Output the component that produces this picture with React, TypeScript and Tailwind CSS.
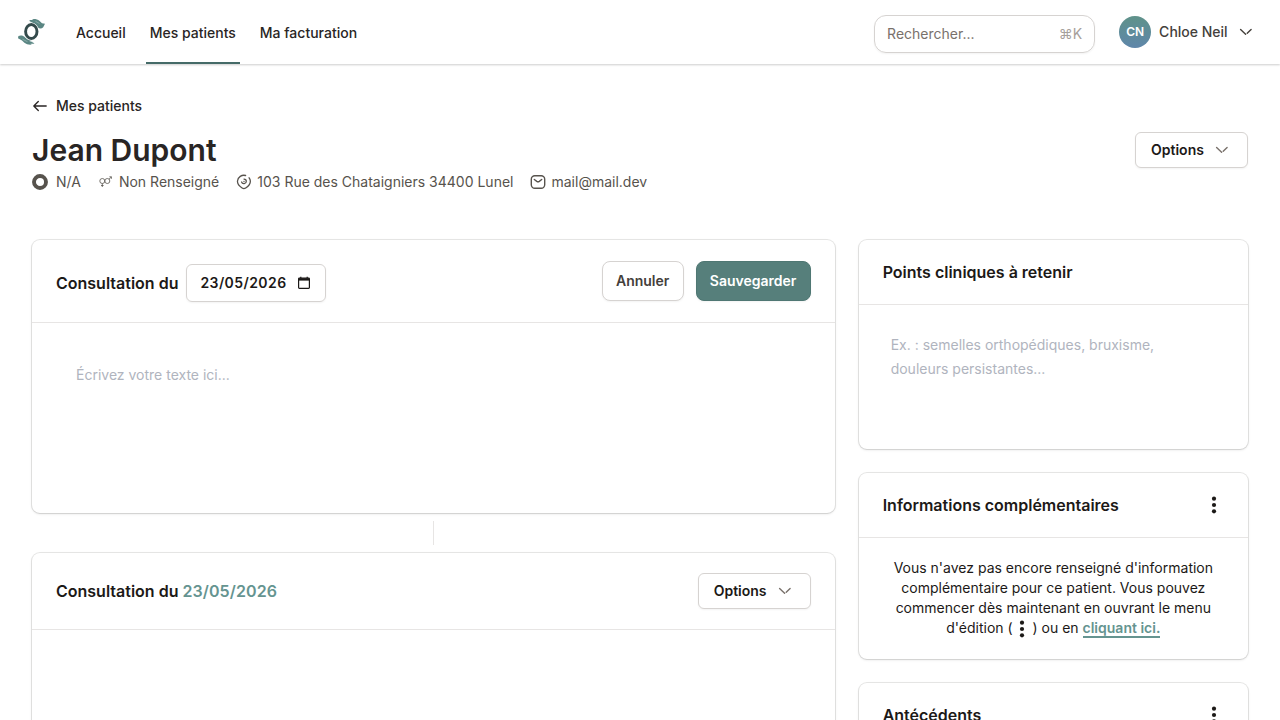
import { ReactNode } from 'react';
import clsx from 'clsx';

function Logo() {
    return (
        <svg width="28" height="26" viewBox="0 0 28 26" fill="none">
            <path d="M11.500 1.100h4.200L14 .2c3-.4 5.500.2 7.600 1.800l2.400 2.300 3 .5-1.800 3.400c-1.500 1.600-3.800 1.500-5.300.2-1.600-1.600-3-2.600-4.800-3.200l-3-1.500 3 .2-3.400-1.600z" fill="#5a8683" />
            <path d="M16.500 24.700h-4.200l1.700.9c-3 .4-5.500-.2-7.600-1.800L4 21.500 0 19.300l.4-2.200c1.500-.8 4-1 6 .7 1.600 1.600 3 2.600 4.800 3.200l3.500 1.300-3.500 0 3.900 1.200z" fill="#5a8683" />
            <path d="M17.500 2.300l4 2.200M4.500 20.300l5 2.400" stroke="#a9c2c0" strokeWidth=".6" />
            <ellipse cx="13.300" cy="12.500" rx="5.700" ry="7" fill="#fff" stroke="#fff" strokeWidth="4" />
            <ellipse cx="13.300" cy="12.500" rx="5.700" ry="7" stroke="#334a4b" strokeWidth="2.900" />
        </svg>
    );
}

function ChevronDown({ className }: { className?: string }) {
    return (
        <svg className={className} width="16" height="16" viewBox="0 0 16 16" fill="none" stroke="currentColor" strokeWidth="1.400" strokeLinecap="round">
            <path d="M2.600 5.400 7.600 10.200" />
            <path d="M9.200 9.300 13.100 5.400" />
        </svg>
    );
}

function Dots({ className }: { className?: string }) {
    return (
        <svg className={className} width="24" height="24" viewBox="0 0 24 24" fill="currentColor">
            <circle cx="12" cy="5.700" r="2.100" />
            <circle cx="12" cy="12" r="2.100" />
            <circle cx="12" cy="18.300" r="2.100" />
        </svg>
    );
}

function OptionsButton() {
    return (
        <button className="flex h-9 w-[113px] items-center justify-between rounded-md border border-stone-300 bg-white pr-[17px] pl-[15px] text-sm font-semibold text-stone-900 shadow-xs">
            Options
            <ChevronDown className="text-stone-500" />
        </button>
    );
}

function Card({ header, headerClass, className, children }: {
    header: ReactNode;
    headerClass: string;
    className?: string;
    children?: ReactNode;
}) {
    return (
        <section className={clsx('rounded-lg bg-white shadow-sm ring-1 ring-stone-900/10', className)}>
            <div className={clsx('flex items-center justify-between border-b border-stone-200 px-6', headerClass)}>
                {header}
            </div>
            {children}
        </section>
    );
}

function Header() {
    return (
        <header className="flex h-16 shrink-0 items-center bg-white shadow-[0_1px_2px_0_rgba(0,0,0,0.2)]">
            <div className="ml-[18px] w-[54px]">
                <Logo />
            </div>
            <nav className="flex h-full gap-4 text-sm font-medium text-stone-800">
                <a className="flex items-center border-b-2 border-transparent px-1 pt-1">Accueil</a>
                <a className="flex items-center border-b-2 border-[#456b68] px-1 pt-1">Mes patients</a>
                <a className="flex items-center border-b-2 border-transparent px-1 pt-1">Ma facturation</a>
            </nav>
            <div className="mt-1 ml-auto flex h-[38px] w-[221px] items-center justify-between rounded-xl border border-stone-300 px-3 text-sm shadow-xs">
                <span className="text-stone-500">Rechercher...</span>
                <span className="text-stone-400">⌘K</span>
            </div>
            <div className="mr-[26px] ml-6 flex items-center text-sm font-medium text-stone-700">
                <span className="mr-2 flex size-8 items-center justify-center rounded-full bg-linear-to-b from-[#5f9289] to-[#5f86aa] text-xs font-semibold text-white">CN</span>
                Chloe Neil
                <ChevronDown className="ml-[10.400px]" />
            </div>
        </header>
    );
}

function PatientDetails() {
    return (
        <div className="mt-0.5 flex h-6 items-center text-sm text-stone-600">
            <svg className="mr-2" width="16" height="16" viewBox="0 0 16 16" fill="none" stroke="currentColor" strokeWidth="3.900">
                <circle cx="8" cy="8" r="6" />
            </svg>
            N/A
            <svg className="mr-[7px] ml-[18px]" width="13" height="12" viewBox="0 0 13 12" fill="none" stroke="currentColor" strokeWidth=".8">
                <circle cx="3.300" cy="5" r="2.500" />
                <circle cx="8.300" cy="5" r="2.500" />
                <path d="M3.300 7.500v3.500M2 9.500h2.600M10 3.200 12.300 1M10.400.8h2v2" />
            </svg>
            Non Renseigné
            <svg className="mr-[5px] ml-[17px]" width="16" height="16" viewBox="0 0 16 16" fill="none" stroke="currentColor" strokeWidth="1.300" strokeLinecap="round">
                <path d="M9.600 1.500A6.400 6.400 0 0 0 1.500 7c-.3 3 1.600 5 4.600 7 1.200.8 2.400.8 3.600 0 3-2 5-4.200 4.600-7.200-.1-1.200-.6-2.200-1.200-3" />
                <path d="M5.600 8c.8 2.600 4.700 2 4.700-.7A2.300 2.300 0 0 0 8 5.100M8 7.400v.2" />
            </svg>
            103 Rue des Chataigniers 34400 Lunel
            <svg className="mr-[5.500px] ml-[16.500px]" width="16" height="16" viewBox="0 0 16 16" fill="none" stroke="currentColor" strokeWidth="1.400" strokeLinecap="round">
                <rect x="1.300" y="1.800" width="13.400" height="12.400" rx="3.500" />
                <path d="M4.300 5.500 6.800 7.300c.8.500 1.700.5 2.500 0l2.400-1.800" />
            </svg>
            mail@mail.dev
        </div>
    );
}

export default function App() {
    return (
        <div className="flex h-screen flex-col overflow-hidden bg-white font-['Inter',sans-serif] text-stone-900">
            <Header />
            <main className="px-8 pt-8">
                <a className="flex h-5 items-center gap-2 text-sm font-medium text-stone-800">
                    <svg width="16" height="16" viewBox="0 0 16 16" fill="none" stroke="currentColor" strokeWidth="1.300" strokeLinecap="round" strokeLinejoin="round">
                        <path d="M6.300 3.500 1.800 8l4.500 4.500M1.900 8h12.300" />
                    </svg>
                    Mes patients
                </a>
                <div className="mt-4 flex h-9 items-center justify-between">
                    <h1 className="text-3xl font-semibold text-stone-800">Jean Dupont</h1>
                    <OptionsButton />
                </div>
                <PatientDetails />

                <div className="mt-[46px] grid grid-cols-3 items-start gap-6">
                    <div className="col-span-2">
                        <Card
                            className="h-[273px]"
                            headerClass="h-[83px]"
                            header={
                                <>
                                    <div className="mt-1 flex items-center gap-2 font-semibold">
                                        Consultation du
                                        <div className="flex h-[38px] w-[140px] items-center justify-between rounded-md border border-stone-300 px-[13px] text-sm shadow-xs">
                                            <span className="tracking-[0.42px]">23/05/2026</span>
                                            <svg className="mr-0.5" width="12" height="14" viewBox="0 0 12 14" fill="none" stroke="currentColor" strokeWidth="1.200">
                                                <rect x=".6" y="2.100" width="10.800" height="10.300" rx=".8" />
                                                <path d="M.6 3.400h10.800" strokeWidth="2.400" />
                                                <path d="M2.800.8v1.400M9.200.8v1.400" />
                                            </svg>
                                        </div>
                                    </div>
                                    <div className="flex gap-3 text-sm font-semibold">
                                        <button className="h-10 w-[82px] rounded-lg border border-stone-300 bg-white text-stone-700 shadow-xs">Annuler</button>
                                        <button className="h-10 w-[115px] rounded-lg border border-[#4f7773] bg-[#567f7b] text-white shadow-xs">Sauvegarder</button>
                                    </div>
                                </>
                            }
                        >
                            <p className="px-11 pt-[42px] text-sm text-[#b0b4be]">Écrivez votre texte ici...</p>
                        </Card>
                        <div className="mx-auto my-2 h-6 w-px bg-stone-200" />
                        <Card
                            className="h-[273px]"
                            headerClass="h-[77px]"
                            header={
                                <>
                                    <h2 className="font-semibold">
                                        Consultation du <span className="tracking-[0.1px] text-[#659490]">23/05/2026</span>
                                    </h2>
                                    <OptionsButton />
                                </>
                            }
                        />
                    </div>

                    <div className="flex flex-col gap-6">
                        <Card className="h-[209px]" headerClass="h-[65px]" header={<h2 className="font-semibold">Points cliniques à retenir</h2>}>
                            <p className="pt-7 pr-12 pl-8 text-sm leading-6 text-[#b0b4be]">
                                Ex. : semelles orthopédiques, bruxisme, douleurs persistantes...
                            </p>
                        </Card>
                        <Card
                            className="h-[186px]"
                            headerClass="h-[65px]"
                            header={
                                <>
                                    <h2 className="font-semibold">Informations complémentaires</h2>
                                    <Dots className="-mr-[1.500px]" />
                                </>
                            }
                        >
                            <p className="px-8 pt-5 text-center text-sm">
                                Vous n'avez pas encore renseigné d'information complémentaire pour ce patient. Vous pouvez commencer dès maintenant en ouvrant le menu d'édition ({' '}
                                <Dots className="-my-1 -mr-[5.500px] -ml-[6.500px] inline" /> ) ou en{' '}
                                <a className="border-b-2 border-[#659490] font-semibold text-[#659490]">cliquant ici.</a>
                            </p>
                        </Card>
                        <Card
                            className="h-[186px]"
                            headerClass="h-[65px]"
                            header={
                                <>
                                    <h2 className="font-semibold">Antécédents</h2>
                                    <Dots className="-mr-[1.500px]" />
                                </>
                            }
                        />
                    </div>
                </div>
            </main>
        </div>
    );
}
